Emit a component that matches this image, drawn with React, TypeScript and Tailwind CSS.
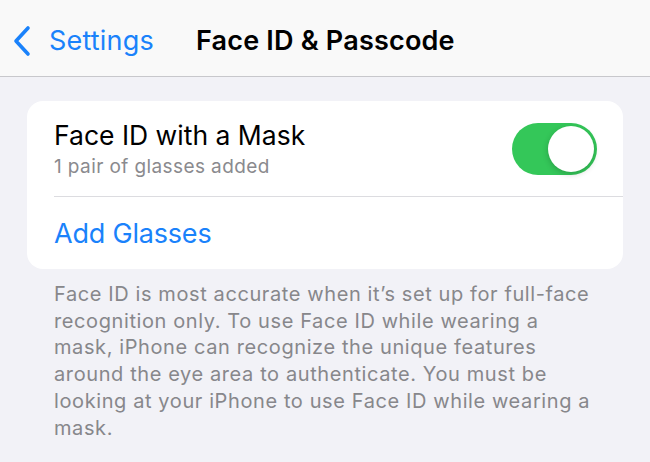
import React from "react";

const font = { fontFamily: "Inter, 'Noto Sans', sans-serif" };

function Chevron() {
  return (
    <svg width="20" height="32" viewBox="0 0 20 32" className="shrink-0">
      <path
        d="M16 3 L4 16 L16 29"
        fill="none"
        stroke="#1a82fb"
        strokeWidth="3.6"
        strokeLinecap="round"
        strokeLinejoin="round"
      />
    </svg>
  );
}

function Toggle() {
  return (
    <div className="flex h-[52px] w-[85px] items-center justify-end rounded-full bg-[#34c759] p-[3px]">
      <div className="h-[46px] w-[46px] rounded-full bg-white shadow-[0_2px_6px_rgba(0,0,0,0.2)]" />
    </div>
  );
}

const footerLines = [
  "Face ID is most accurate when it’s set up for full-face",
  "recognition only. To use Face ID while wearing a",
  "mask, iPhone can recognize the unique features",
  "around the eye area to authenticate. You must be",
  "looking at your iPhone to use Face ID while wearing a",
  "mask.",
];

export default function App() {
  return (
    <div className="h-[462px] w-[650px] overflow-hidden bg-[#f2f2f7]" style={font}>
      <div className="flex h-[77px] items-center border-b border-[#c8c8cc] bg-[#f9f9f9] pl-[12px] pt-[6px]">
        <div className="flex items-center gap-[17px]">
          <Chevron />
          <span className="text-[27px] tracking-[0.2px] text-[#1a82fb]">Settings</span>
        </div>
        <span className="ml-[42px] text-[27px] font-semibold tracking-[0.2px] text-black">
          Face ID &amp; Passcode
        </span>
      </div>

      <div className="mx-[27px] mt-[24px] rounded-[16px] bg-white">
        <div className="flex h-[95px] items-center justify-between pl-[27px] pr-[26px]">
          <div className="flex flex-col">
            <span className="text-[26.5px] leading-[32px] text-black">Face ID with a Mask</span>
            <span className="mt-[4px] text-[19px] leading-[24px] tracking-[0.4px] text-[#8a8a8e]">
              1 pair of glasses added
            </span>
          </div>
          <Toggle />
        </div>
        <div className="ml-[27px] h-px bg-[#dcdce0]" />
        <div className="flex h-[72px] items-center pl-[27px] pt-[3px]">
          <span className="text-[27px] tracking-[-0.2px] text-[#1a82fb]">Add Glasses</span>
        </div>
      </div>

      <div className="mt-[12px] flex flex-col pl-[54px] text-[20px] leading-[26.7px] tracking-[0.6px] text-[#87878b]">
        {footerLines.map((line) => (
          <span key={line} className="whitespace-nowrap">
            {line}
          </span>
        ))}
      </div>
    </div>
  );
}
